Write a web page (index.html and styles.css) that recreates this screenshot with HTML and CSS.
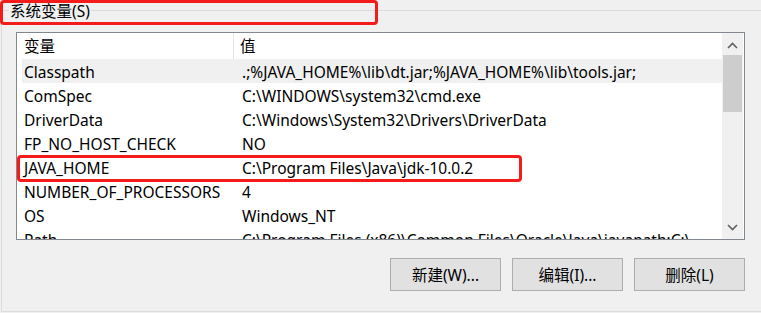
FILE: index.html
```html
<!DOCTYPE html>
<html>
<head>
<meta charset="UTF-8">
<title>系统变量</title>
<link rel="stylesheet" href="styles.css">
</head>
<body>
<div class="group">
  <div class="legend">系统变量(S)</div>
  <div class="listbox">
    <div class="list">
      <div class="head">
        <div class="col-name">变量</div>
        <div class="col-value">值</div>
      </div>
      <div class="row hover">
        <div class="col-name">Classpath</div>
        <div class="col-value">.;%JAVA_HOME%\lib\dt.jar;%JAVA_HOME%\lib\tools.jar;</div>
      </div>
      <div class="row">
        <div class="col-name">ComSpec</div>
        <div class="col-value">C:\WINDOWS\system32\cmd.exe</div>
      </div>
      <div class="row">
        <div class="col-name">DriverData</div>
        <div class="col-value">C:\Windows\System32\Drivers\DriverData</div>
      </div>
      <div class="row">
        <div class="col-name">FP_NO_HOST_CHECK</div>
        <div class="col-value">NO</div>
      </div>
      <div class="row">
        <div class="col-name">JAVA_HOME</div>
        <div class="col-value">C:\Program Files\Java\jdk-10.0.2</div>
      </div>
      <div class="row">
        <div class="col-name">NUMBER_OF_PROCESSORS</div>
        <div class="col-value">4</div>
      </div>
      <div class="row">
        <div class="col-name">OS</div>
        <div class="col-value">Windows_NT</div>
      </div>
      <div class="row">
        <div class="col-name">Path</div>
        <div class="col-value">C:\Program Files (x86)\Common Files\Oracle\Java\javapath;C:\</div>
      </div>
    </div>
    <div class="scrollbar">
      <svg class="arrow" width="21" height="20" viewBox="0 0 21 20"><path d="M6 15 L10.5 10.5 L15 15" fill="none" stroke="#606060" stroke-width="1.6"/></svg>
      <div class="thumb"></div>
      <div class="track"></div>
      <svg class="arrow" width="21" height="20" viewBox="0 0 21 20"><path d="M6 6 L10.5 10.5 L15 6" fill="none" stroke="#606060" stroke-width="1.6"/></svg>
    </div>
  </div>
  <div class="buttons">
    <button class="btn">新建(W)...</button>
    <button class="btn">编辑(I)...</button>
    <button class="btn">删除(L)</button>
  </div>
</div>
<div class="mark mark-title"></div>
<div class="mark mark-row"></div>
</body>
</html>
```

FILE: styles.css
```css
body {
  margin: 0;
  width: 761px;
  height: 313px;
  overflow: hidden;
  position: relative;
  background-color: #f0f0f0;
  font-family: "Noto Sans", "Noto Sans CJK SC", sans-serif;
  font-size: 15.5px;
  color: #000;
}
.group {
  margin: 10px 0 0 1px;
  height: 300px;
  border: 1px solid #dcdcdc;
  border-right: none;
}
.legend {
  width: fit-content;
  margin: -11px 0 0 7px;
  padding: 0 1px;
  height: 23px;
  line-height: 23px;
  background: #f0f0f0;
}
.listbox {
  display: flex;
  margin: 9px 0 0 14px;
  width: 727px;
  height: 206px;
  border: 1px solid #828790;
  background: #fff;
  overflow: hidden;
}
.list {
  width: 705px;
  overflow: hidden;
}
.head {
  display: flex;
  height: 26px;
  line-height: 27px;
}
.head .col-name {
  border-right: 1px solid #e5e5e5;
}
.row {
  display: flex;
  height: 24px;
  line-height: 26px;
  margin-left: 5px;
  white-space: nowrap;
  overflow: hidden;
}
.row.hover {
  background: #f0f0f0;
}
.col-name {
  width: 209px;
  padding-left: 7px;
  flex-shrink: 0;
}
.head .col-value {
  padding-left: 6px;
}
.row .col-name {
  width: 212px;
  padding-left: 2px;
}
.row .col-value {
  padding-left: 6px;
}
.scrollbar {
  width: 21px;
  display: flex;
  flex-direction: column;
  background: #f0f0f0;
}
.arrow {
  display: block;
  flex-shrink: 0;
}
.thumb {
  margin: 2px 1px 0;
  height: 57px;
  background: #cdcdcd;
}
.track {
  flex: 1;
}
.buttons {
  display: flex;
  gap: 11px;
  margin: 18px 0 0 388px;
}
.btn {
  width: 111px;
  height: 33px;
  padding: 0;
  border: 1px solid #adadad;
  background: #e1e1e1;
  font-family: inherit;
  font-size: 15.5px;
  color: #000;
}
.mark {
  position: absolute;
  border: 3px solid #f41b1b;
  border-radius: 4px;
}
.mark-title {
  left: 0;
  top: 0;
  width: 372px;
  height: 19px;
}
.mark-row {
  left: 17px;
  top: 155px;
  width: 499px;
  height: 21px;
}
```
